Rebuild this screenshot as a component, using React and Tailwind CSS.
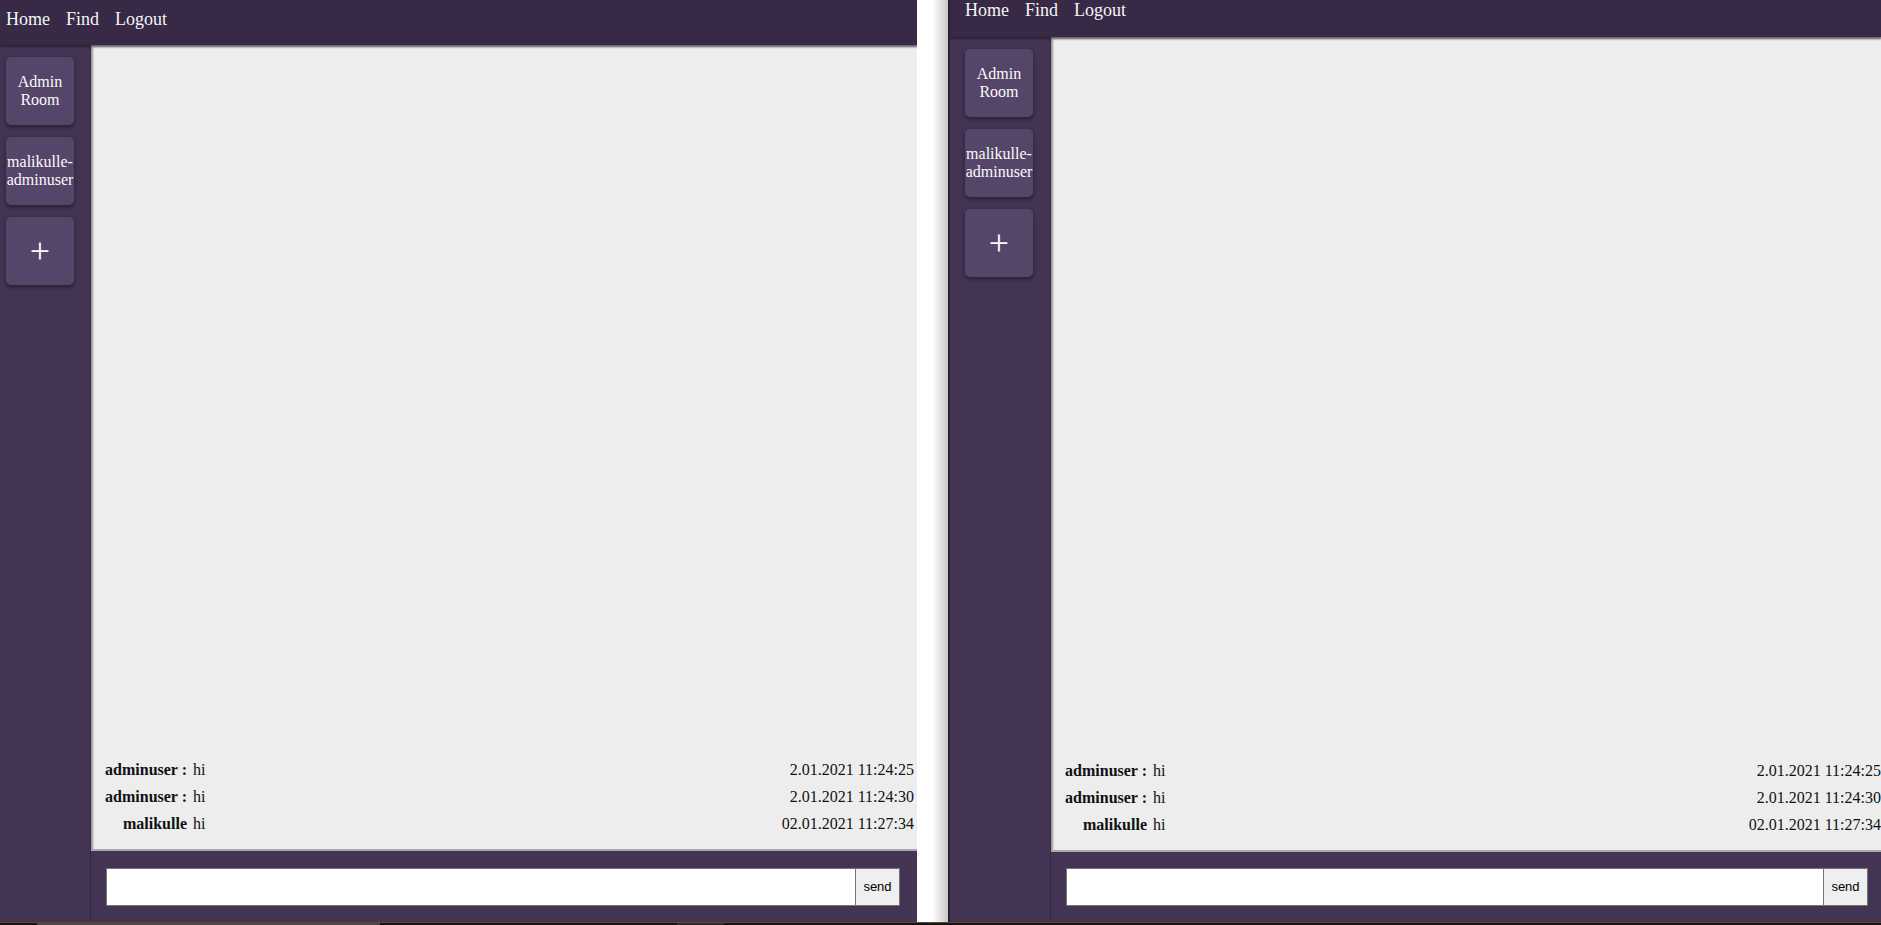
import React from "react";

const messages = [
  { user: "adminuser :", text: "hi", time: "2.01.2021 11:24:25" },
  { user: "adminuser :", text: "hi", time: "2.01.2021 11:24:30" },
  { user: "malikulle", text: "hi", time: "02.01.2021 11:27:34" },
];

const rooms = [["Admin", "Room"], ["malikulle-", "adminuser"]];

function RoomButton({ children, big }) {
  return (
    <div
      className={`w-[68px] h-[68px] shrink-0 rounded-[5px] bg-[#554669] text-[#fafafa] flex items-center justify-center text-center shadow-[0_2px_4px_rgba(0,0,0,0.45)] ${
        big ? "text-[36px] leading-none" : "text-[16px] leading-[18px]"
      }`}
    >
      {children}
    </div>
  );
}

function ChatWindow({ headerClass, sidebarClass, mainClass, timeClass, barClass }) {
  return (
    <div className="h-full flex flex-col">
      {/* top nav */}
      <div className={`shrink-0 bg-[#382946] flex gap-4 text-[18px] text-[#f5f5f5] shadow-[0_2px_2px_rgba(0,0,0,0.35)] z-10 ${headerClass}`}>
        <span>Home</span>
        <span>Find</span>
        <span>Logout</span>
      </div>

      <div className="flex-1 flex min-h-0">
        {/* rooms */}
        <div className={`shrink-0 bg-[#433453] flex flex-col gap-3 pt-3 ${sidebarClass}`}>
          {rooms.map((r) => (
            <RoomButton key={r[1]}>
              <span>
                {r[0]}
                <br />
                {r[1]}
              </span>
            </RoomButton>
          ))}
          <RoomButton big>+</RoomButton>
        </div>

        {/* chat */}
        <div className={`shrink-0 flex flex-col border-l border-[#342843] ${mainClass}`}>
          <div className="flex-1 bg-[#ededed] flex flex-col justify-end pb-[12px] shadow-[inset_2px_2px_2px_rgba(0,0,0,0.35)] border-b-2 border-[#a9a9a9]">
            {messages.map((m, i) => (
              <div key={i} className="h-[27px] flex items-center text-[16px] text-[#111]">
                <span className="w-[96px] shrink-0 text-right font-bold">{m.user}</span>
                <span className="ml-[6px]">{m.text}</span>
                <span className={`ml-auto ${timeClass}`}>{m.time}</span>
              </div>
            ))}
          </div>
          <div className={`shrink-0 bg-[#433453] flex items-center pl-[15px] ${barClass}`}>
            <div className="flex-1 h-[38px] bg-white border border-[#767676]" />
            <div className="h-[38px] w-[44px] shrink-0 bg-[#efefef] border border-[#767676] border-l-0 flex items-center justify-center text-[13px] text-black font-['Liberation_Sans',Arial,sans-serif]">
              send
            </div>
          </div>
        </div>
      </div>
    </div>
  );
}

export default function App() {
  return (
    <div className="w-[1881px] h-[925px] overflow-hidden bg-[#151515] flex flex-col font-['Liberation_Serif','Times_New_Roman',serif]">
      <div className="h-[922px] flex shrink-0">
        <div className="w-[917px] shrink-0 overflow-hidden">
          <ChatWindow
            headerClass="h-[45px] pl-[6px] pt-[6px]"
            sidebarClass="w-[90px] pl-[6px]"
            mainClass="w-[827px]"
            timeClass="pr-[3px]"
            barClass="h-[71px] pr-[17px]"
          />
        </div>
        <div className="w-[31px] shrink-0 bg-gradient-to-r from-white via-white to-[#c8c8c8]" />
        <div className="w-[933px] shrink-0 overflow-hidden border-l-2 border-[#2a2033]">
          <ChatWindow
            headerClass="h-[37px] pl-[15px] pt-[2px] leading-[16px]"
            sidebarClass="w-[100px] pl-[15px]"
            mainClass="w-[835px]"
            timeClass="pr-[4px]"
            barClass="h-[70px] pr-[17px]"
          />
        </div>
      </div>
      <div className="h-[3px] flex border-t border-[#6b4423]">
        <div className="w-[37px]" />
        <div className="w-[343px] bg-[#4a4a4a]" />
        <div className="w-[297px]" />
        <div className="w-[47px] bg-[#2e2e2e]" />
      </div>
    </div>
  );
}
